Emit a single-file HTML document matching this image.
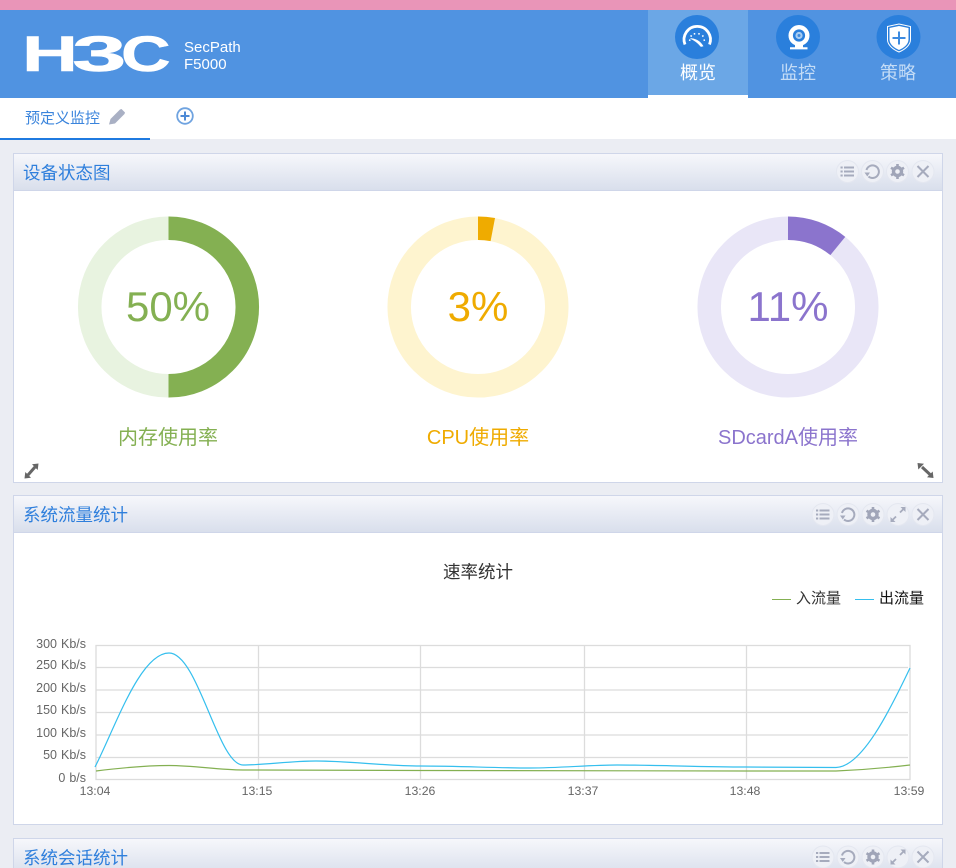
<!DOCTYPE html>
<html lang="zh">
<head>
<meta charset="utf-8">
<title>H3C SecPath F5000</title>
<style>
html,body{margin:0;padding:0;width:956px;height:868px;overflow:hidden;background:#ebedf3;font-family:"Liberation Sans","Noto Sans CJK SC",sans-serif}
#root{position:relative;width:956px;height:868px;overflow:hidden;background:#ebedf3}
.a{position:absolute;white-space:nowrap}
.panel{position:absolute;left:13px;width:928px;border:1px solid #cfd6e9;background:#fff;box-sizing:content-box}
.ph{position:absolute;left:0;top:0;right:0;height:36px;background:linear-gradient(#f6f7fb,#d9dfec);border-bottom:1px solid #cfd6e9}
.pt{position:absolute;left:9px;top:7px;font-size:17.5px;line-height:24px;color:#2f7fdc}
.t{font-size:18px;line-height:24px;text-align:center}
.lg{position:absolute;top:25px;font-size:50px;line-height:58px;font-weight:bold;color:#fff;transform-origin:0 0;-webkit-text-stroke:.5px #fff}
.yl{position:absolute;left:0;width:86px;text-align:right;font-size:12.5px;line-height:14px;color:#666;word-spacing:.5px;white-space:nowrap}
.xl{position:absolute;top:784px;width:60px;text-align:center;font-size:12.3px;line-height:14px;color:#666}
svg{position:absolute;overflow:visible}
</style>
</head>
<body>
<div id="root">
<div class="a" style="left:0;top:0;width:956px;height:10px;background:#e995b8"></div>
<div class="a" style="left:0;top:10px;width:956px;height:88px;background:#5093e1"></div>
<div class="a" style="left:648px;top:10px;width:100px;height:85px;background:#6ba7e6"></div>
<div class="a" style="left:648px;top:95px;width:100px;height:3px;background:#fff"></div>

<div class="lg" style="left:21.6px;transform:scaleX(1.55)">H</div>
<div class="lg" style="left:72px;transform:scaleX(1.96)">3</div>
<div class="lg" style="left:120.6px;transform:scaleX(1.375)">C</div>
<div class="a" style="left:184px;top:39px;font-size:15px;line-height:17px;color:#fff">SecPath<br>F5000</div>

<svg width="956" height="98" style="left:0;top:0" fill="none">
  <circle cx="697" cy="37" r="22" fill="#2a7fdc"/>
  <circle cx="798" cy="37" r="22" fill="#2a7fdc"/>
  <circle cx="898.500" cy="37" r="22" fill="#2a7fdc"/>
  <path d="M685 44.500A13.200 13.200 0 1 1 709.500 44.500" stroke="#fff" stroke-width="2.800"/>
  <path d="M689 40l1.500 .4M690.500 35.500l1.300 1M694.500 33v1.600M699 33v1.600M703.500 35.500l-1.300 1M705 40l-1.500 .4" stroke="#fff" stroke-width="1.500"/>
  <path d="M690.500 38.500C695 38.500 700 41 703 46L701 46.500C698 43 695 40.500 690.500 38.500z" fill="#fff" stroke="#fff" stroke-width=".6"/>
  <circle cx="799" cy="35.500" r="8.300" stroke="#fff" stroke-width="4.400"/>
  <circle cx="799" cy="35.500" r="3.600" fill="#a9cdf2"/>
  <circle cx="799" cy="35.500" r="1.500" fill="#3f8ade"/>
  <path d="M795 44h8v4h-8z" fill="#fff"/>
  <path d="M790 48.300h17.500" stroke="#fff" stroke-width="2.200"/>
  <path d="M887.500 26.500l11.500-2.500 11.500 2.500v13c0 5.500-5.500 10-11.500 12.500-6-2.500-11.500-7-11.500-12.500z" stroke="#fff" stroke-width="1"/>
  <path d="M889.500 28l9.500-2 9.500 2v11.500c0 5-5 8.500-9.500 10.500-4.500-2-9.500-5.500-9.500-10.500z" fill="#fff"/>
  <path d="M899 31.500v13M892.500 38h13" stroke="#3d8be0" stroke-width="2"/>
</svg>
<div class="a t" style="left:648px;top:61px;width:100px;color:#fff">概览</div>
<div class="a t" style="left:748px;top:61px;width:100px;color:#c4dcf6">监控</div>
<div class="a t" style="left:848px;top:61px;width:100px;color:#c4dcf6">策略</div>

<div class="a" style="left:0;top:98px;width:956px;height:41px;background:#fff"></div>
<div class="a" style="left:0;top:138px;width:150px;height:2px;background:#1f7ae0"></div>
<div class="a" style="left:25px;top:108px;font-size:15px;line-height:21px;color:#3a84dc">预定义监控</div>
<svg width="956" height="140" style="left:0;top:0" fill="none">
  <path d="M109 124.500l1.500-5.500 9.500-9.500 1.500-.5 3.500 3.500-.5 1.500-9.500 9.500z" fill="#a9b0c4"/>
  <circle cx="185" cy="116" r="7.800" stroke="#6fa3e0" stroke-width="1.800"/>
  <path d="M185 111.500v9M180.500 116h9" stroke="#4d8ad6" stroke-width="2"/>
</svg>

<div class="panel" style="top:153px;height:328px">
  <div class="ph"><div class="pt">设备状态图</div></div>
</div>
<svg width="956" height="480" style="left:0;top:0" fill="none">
  <circle cx="168.500" cy="307" r="78.800" stroke="#e8f3e0" stroke-width="23.500"/>
  <path d="M168.500 228.200A78.800 78.800 0 0 1 168.500 385.800" stroke="#84b052" stroke-width="23.500"/>
  <circle cx="478" cy="307" r="78.800" stroke="#fef4cf" stroke-width="23.500"/>
  <path d="M478 228.200A78.800 78.800 0 0 1 492.800 229.600" stroke="#efab00" stroke-width="23.500"/>
  <circle cx="788" cy="307" r="78.800" stroke="#e9e6f7" stroke-width="23.500"/>
  <path d="M788 228.200A78.800 78.800 0 0 1 837.800 246" stroke="#8b74cd" stroke-width="23.500"/>
</svg>
<div class="a" style="left:68px;top:282px;width:200px;text-align:center;font-size:42px;line-height:50px;color:#84b052">50%</div>
<div class="a" style="left:378px;top:282px;width:200px;text-align:center;font-size:42px;line-height:50px;color:#efab00">3%</div>
<div class="a" style="left:688px;top:282px;width:200px;text-align:center;font-size:42px;line-height:50px;color:#8b74cd">11%</div>
<div class="a" style="left:68px;top:425px;width:200px;text-align:center;font-size:20px;line-height:26px;color:#84b052">内存使用率</div>
<div class="a" style="left:378px;top:425px;width:200px;text-align:center;font-size:20px;line-height:26px;color:#efab00">CPU使用率</div>
<div class="a" style="left:688px;top:425px;width:200px;text-align:center;font-size:20px;line-height:26px;color:#8b74cd">SDcardA使用率</div>

<svg width="956" height="490" style="left:0;top:0" fill="none">
  <path d="M28 475l7-8" stroke="#666" stroke-width="3"/>
  <path d="M24.500 478.500l.8-6.500 5.700 5.700zM38.500 463.500l-6.500 .8 5.700 5.700z" fill="#666"/>
  <path d="M922 467l8 7.500" stroke="#666" stroke-width="3"/>
  <path d="M917.500 463l6.500 .8-5.700 5.700zM933.500 478l-6.500-.8 5.700-5.700z" fill="#666"/>
</svg>

<div class="panel" style="top:495px;height:328px">
  <div class="ph"><div class="pt">系统流量统计</div></div>
</div>
<div class="panel" style="top:838px;height:60px">
  <div class="ph"><div class="pt">系统会话统计</div></div>
</div>

<svg width="956" height="868" style="left:0;top:0" fill="none">
  <defs>
    <g id="b"><circle r="11" fill="#eef0f6" stroke="#e4e7f0"/></g>
    <g id="list"><use href="#b"/><path d="M-3.500 -4h10M-3.500 0h10M-3.500 4h10M-7 -4h2.200M-7 0h2.200M-7 4h2.200" stroke="#a6abbd" stroke-width="2"/></g>
    <g id="ref"><use href="#b"/><path d="M-4 5A6.300 6.300 0 1 0 -6 -1.500" stroke="#a6abbd" stroke-width="2"/><path d="M-8 1h5.500l-2.700 4z" fill="#a6abbd"/></g>
    <g id="gear"><use href="#b"/><circle r="4" stroke="#a0a5b8" stroke-width="3.400"/><path d="M0 -7.500v3M0 7.500v-3M-6.500 -3.700l2.600 1.500M6.500 3.700l-2.600-1.500M-6.500 3.700l2.600-1.500M6.500 -3.700l-2.600 1.500" stroke="#a0a5b8" stroke-width="2.600"/></g>
    <g id="exp"><use href="#b"/><path d="M2 -2l3.500-3.500M-2 2l-3.500 3.500" stroke="#a6abbd" stroke-width="1.800"/><path d="M2.500 -7.500h5v5zM-2.500 7.500h-5v-5z" fill="#a6abbd"/></g>
    <g id="x"><use href="#b"/><path d="M-5.500 -5.500L5.500 5.500M5.500 -5.500L-5.500 5.500" stroke="#a6abbd" stroke-width="2"/></g>
  </defs>
  <use href="#list" x="847.500" y="171.500"/><use href="#ref" x="872.500" y="171.500"/><use href="#gear" x="897.500" y="171.500"/><use href="#x" x="923" y="171.500"/>
  <use href="#list" x="823" y="514.500"/><use href="#ref" x="848" y="514.500"/><use href="#gear" x="873" y="514.500"/><use href="#exp" x="898" y="514.500"/><use href="#x" x="923" y="514.500"/>
  <use href="#list" x="823" y="857"/><use href="#ref" x="848" y="857"/><use href="#gear" x="873" y="857"/><use href="#exp" x="898" y="857"/><use href="#x" x="923" y="857"/>

  <path d="M96 667.500H908M96 690H908M96 712.500H908M96 735H908M96 757.500H908" stroke="#dcdcdc" stroke-width="1.300"/>
  <path d="M258.500 645V779M420.500 645V779M584.500 645V779M746.500 645V779" stroke="#dcdcdc" stroke-width="1.300"/>
  <rect x="96" y="645.500" width="814" height="134" stroke="#dcdcdc" stroke-width="1.300"/>
  <path d="M96 771C120 768 145 765.500 169 765.500C195 765.500 218 770 243 770C300 770 360 770.500 420 770.500C530 771 640 771 746 771C780 771 810 771 836 771C860 770 885 768 910 765" stroke="#84b052" stroke-width="1.200"/>
  <path d="M95 767C115 728 140 653 169 653C198 653 218 765 243 765C265 765 290 761 316 761C350 761 385 766 420 766C460 766 495 768 530 768C560 768 590 765 617 765C660 765 700 767 746 767C780 767 810 767.500 836 767.500C862 767 890 710 910 668" stroke="#35bfee" stroke-width="1.200"/>
  <rect x="772" y="599" width="19" height="1" fill="#84b052"/>
  <rect x="855" y="599" width="19" height="1" fill="#35bfee"/>
</svg>

<div class="a" style="left:378px;top:560px;width:200px;text-align:center;font-size:17.5px;line-height:24px;color:#333">速率统计</div>
<div class="a" style="left:796px;top:589px;font-size:15px;line-height:19px;color:#333">入流量</div>
<div class="a" style="left:879px;top:589px;font-size:15px;line-height:19px;color:#111">出流量</div>

<div class="yl" style="top:637px">300 Kb/s</div>
<div class="yl" style="top:658px">250 Kb/s</div>
<div class="yl" style="top:681px">200 Kb/s</div>
<div class="yl" style="top:703px">150 Kb/s</div>
<div class="yl" style="top:726px">100 Kb/s</div>
<div class="yl" style="top:748px">50 Kb/s</div>
<div class="yl" style="top:771px">0 b/s</div>

<div class="xl" style="left:65px">13:04</div>
<div class="xl" style="left:227px">13:15</div>
<div class="xl" style="left:390px">13:26</div>
<div class="xl" style="left:553px">13:37</div>
<div class="xl" style="left:715px">13:48</div>
<div class="xl" style="left:879px">13:59</div>
</div>
</body>
</html>
